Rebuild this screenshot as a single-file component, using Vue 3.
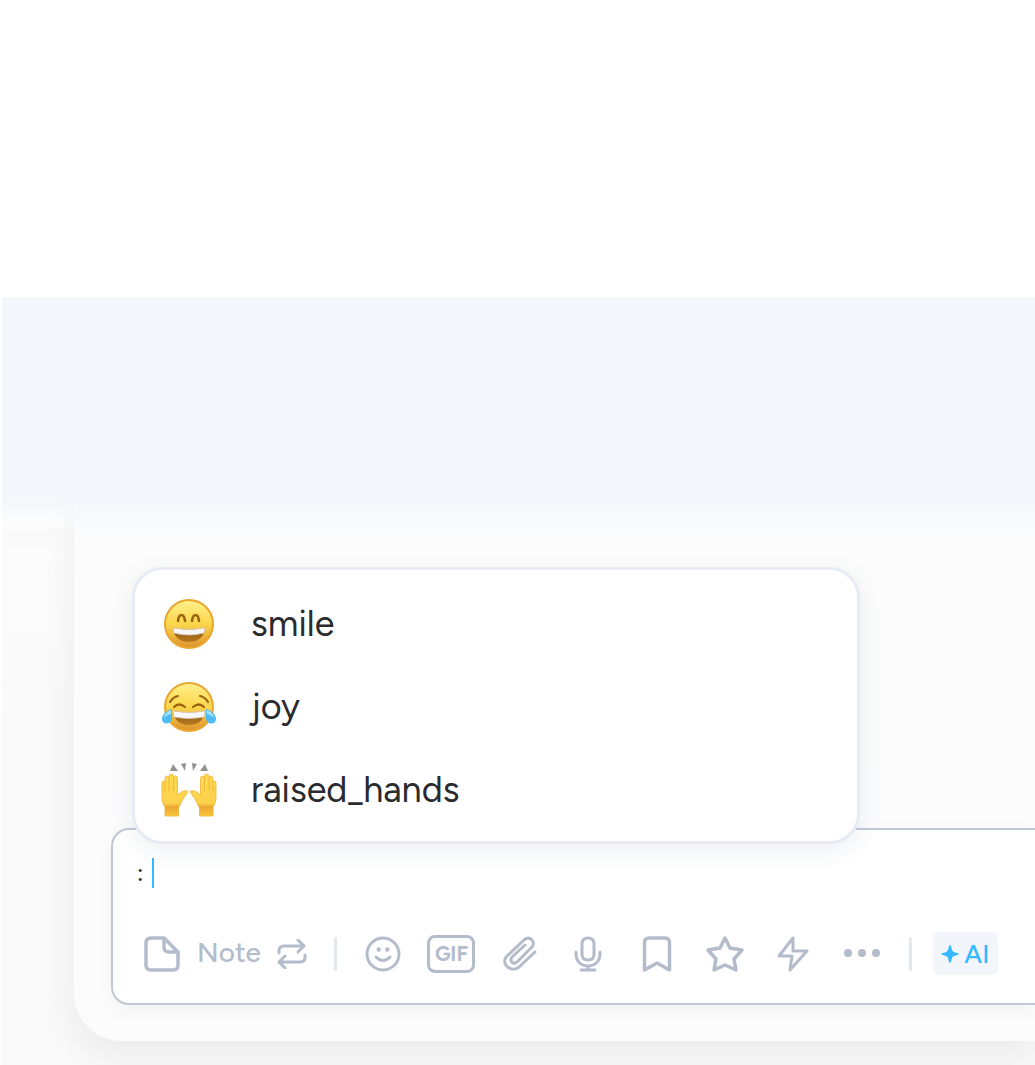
<template>
  <main class="page">
    <section class="stage">
      <div class="panel">
        <ul class="suggestions" aria-label="Emoji suggestions">
          <li v-for="item in suggestions" :key="item">
            <button class="suggestion" type="button" @click="pick(item)">
              <svg v-if="item === 'smile'" class="emoji" viewBox="0 0 56 56" aria-hidden="true">
                <defs>
                  <linearGradient id="face" x1="0" y1="0" x2="0" y2="1">
                    <stop offset="0" stop-color="#fff08c" />
                    <stop offset="0.5" stop-color="#fbd64b" />
                    <stop offset="1" stop-color="#dd922c" />
                  </linearGradient>
                  <linearGradient id="mouth" x1="0" y1="0" x2="0" y2="1">
                    <stop offset="0" stop-color="#8a5713" />
                    <stop offset="1" stop-color="#b87820" />
                  </linearGradient>
                </defs>
                <circle cx="28" cy="28" r="24" fill="url(#face)" stroke="#e9a630" stroke-width="2" />
                <path d="M17 25c1-8 6-8 7 0M31 25c1-8 6-8 7 0" fill="none" stroke="#9c6412" stroke-width="2.600" stroke-linecap="round" />
                <path d="M12 32q16 3 32 0c-1 10-8 14-16 14s-15-4-16-14z" fill="url(#mouth)" />
                <path d="M12 32q16 3 32 0l-1 5q-15 4-30 0z" fill="#f7f7f7" stroke="#d4cbbd" stroke-width="0.7" />
              </svg>
              <svg v-else-if="item === 'joy'" class="emoji" viewBox="0 0 56 56" aria-hidden="true">
                <circle cx="28" cy="28" r="24" fill="url(#face)" stroke="#e9a630" stroke-width="2" />
                <path d="M9 23q3-5 8-6M47 23q-3-5-8-6M13 28q5-5 11 0M32 28q6-5 11 0" fill="none" stroke="#9c6412" stroke-width="2.200" stroke-linecap="round" />
                <path d="M12 32q16 3 32 0c-1 9-7 14-16 14s-15-5-16-14z" fill="url(#mouth)" />
                <path d="M12 32q16 3 32 0l-1 6q-15 3-30 0z" fill="#f7f7f7" stroke="#d4cbbd" stroke-width="0.7" />
                <path d="M11 30C5 32 1 36 1 40c0 6 9 6 10 0zM45 30c6 2 10 6 10 10 0 6-9 6-10 0z" fill="#4dbcf5" />
                <path d="M10 31c-4 2-7 5-7 8 3-3 5-4 7-4zM46 31c4 2 7 5 7 8-3-3-5-4-7-4z" fill="#a9e4ff" />
              </svg>
              <svg v-else class="emoji" viewBox="0 0 56 56" aria-hidden="true">
                <defs>
                  <linearGradient id="skin" x1="0" y1="0" x2="0" y2="1">
                    <stop offset="0" stop-color="#ffdb50" />
                    <stop offset="0.7" stop-color="#fcd04b" />
                    <stop offset="0.78" stop-color="#eba730" />
                    <stop offset="1" stop-color="#fbc63c" />
                  </linearGradient>
                  <g id="hand">
                    <path
                      d="M4 54V45C1 41 1 37 1 30V21q0-2 1.500-2T4 20V17q0-3 2-3t2 2v-1q0-3 2.300-3t2.200 3v1q0-2 2-2t2 3V33l4-3q3-2 6-1 .8 1-1 3-4 5-6 10l-2 4v8z"
                      fill="url(#skin)"
                      stroke="#edb236"
                      stroke-width="0.8"
                    />
                    <path d="M4 20v9M8 16v13M12.500 16v13" fill="none" stroke="#efb136" stroke-width="0.9" />
                  </g>
                </defs>
                <use href="#hand" />
                <use href="#hand" transform="matrix(-1 0 0 1 56 0)" />
                <path d="M12 2l5 7-8 0zM20 2l5-1-1 8zM31 1l5 1-4 7zM44 2l3 7h-8z" fill="#929292" />
              </svg>
              <span>{{ item }}</span>
            </button>
          </li>
        </ul>

        <form class="composer" @submit.prevent>
          <div class="draft-row">
            <input v-model="draft" class="draft" type="text" aria-label="Note text" :style="{ width: `${draft.length}ch` }" />
            <span class="caret"></span>
          </div>

          <div class="toolbar">
            <button class="note" type="button">
              <svg class="note-icon" viewBox="0 0 36 36" aria-hidden="true">
                <path d="M7 2H20L34 16V29Q34 34 29 34H7Q2 34 2 29V7Q2 2 7 2zM20 2V11Q20 16 25 16H34" />
              </svg>
              <span class="note-label">Note</span>
              <svg class="repeat-icon" viewBox="0 0 30 30" aria-hidden="true">
                <path d="M2 14V12Q2 7 7 7H27M21 1l6 6-6 6M28 16v2q0 5-5 5H3M8 17l-6 6 6 6" />
              </svg>
            </button>

            <span class="divider"></span>

            <div class="tools">
              <button v-for="tool in tools" :key="tool.name" class="tool" type="button" :aria-label="tool.name">
                <span v-if="tool.name === 'GIF'" class="gif">GIF</span>
                <svg v-else viewBox="0 0 36 36" aria-hidden="true">
                  <path :d="tool.path" :class="{ filled: tool.filled, thick: tool.thick }" />
                  <path v-if="tool.dots" class="filled" :d="tool.dots" />
                </svg>
              </button>
            </div>

            <span class="divider"></span>

            <button class="ai" type="button">
              <svg viewBox="0 0 18 18" aria-hidden="true">
                <path d="M9 0Q10 0 10.500 3 11 6 12 6.500 13 7 16 8 18 8.500 18 9T16 10Q13 11 12 11.500 11 12 10.500 15 10 18 9 18T7.500 15Q7 12 6 11.500 5 11 2 10 0 9.500 0 9T2 8Q5 7 6 6.500 7 6 7.500 3 8 0 9 0z" />
              </svg>
              <span>AI</span>
            </button>
          </div>
        </form>
      </div>
    </section>
  </main>
</template>

<script setup>
import { ref } from "vue"

const draft = ref(":")
const suggestions = ["smile", "joy", "raised_hands"]

const tools = [
  {
    name: "Emoji",
    path: "M34 18A16 16 0 1 1 2 18A16 16 0 0 1 34 18M11 21Q18 28 25 21",
    dots: "M11.500 13.500a2.200 2.200 0 1 0 4.400 0a2.200 2.200 0 1 0-4.400 0M20.100 13.500a2.200 2.200 0 1 0 4.400 0a2.200 2.200 0 1 0-4.400 0",
  },
  { name: "GIF" },
  {
    name: "Attach file",
    path: "M33 16L17 31C10 37-1 29 4 21L22 4C28-1 34 6 30 11L15 26C11 29 7 25 10 21L23 9",
  },
  {
    name: "Record audio",
    path: "M18 2Q24 2 24 8V18Q24 24 18 24T12 18V8Q12 2 18 2zM6 16V18C6 34 30 34 30 18V16M18 30V34M11 34H25",
  },
  {
    name: "Saved replies",
    path: "M5.500 34V7Q5.500 2 10 2H26Q30.500 2 30.500 7V34L18 27z",
    thick: true,
  },
  {
    name: "Favorite",
    path: "M18 2L23 12L35 14L27 23L29 34L18 29L7 34L9 23L1 14L13 12z",
    thick: true,
  },
  {
    name: "Shortcuts",
    path: "M18 2L4 20H17L15 34L32 15H18z",
  },
  {
    name: "More",
    path: "M0 17a4 4 0 1 0 8 0a4 4 0 1 0-8 0M14 17a4 4 0 1 0 8 0a4 4 0 1 0-8 0M28 17a4 4 0 1 0 8 0a4 4 0 1 0-8 0",
    filled: true,
  },
]

function pick(name) {
  draft.value = `:${name}:`
}
</script>

<style>
body {
  margin: 0;
  background: #fff;
}
</style>

<style scoped>
.page {
  padding: 297px 0 0 2px;
  font-family: Figtree, Inter, sans-serif;
  color: #292b2f;
}

.stage {
  padding: 203px 0 24px 72px;
  overflow: hidden;
  background: linear-gradient(to bottom, #f3f7fb 200px, #fdfdfd 228px, #f9f9f9 235px, #fcfcfc 256px, #f9f9f9 420px);
}

.panel {
  padding: 67px 0 36px 37px;
  border-bottom-left-radius: 48px;
  background: linear-gradient(to bottom, #f4f7fb, #f8fafd 20px, #fcfcfc 42px, #fcfcfd);
  box-shadow: 0 14px 36px rgba(0, 0, 0, 0.06);
  clip-path: inset(0 0 -24px -60px);
}

button,
input {
  border: 0;
  padding: 0;
  background: none;
  color: inherit;
  font: inherit;
}

.suggestions {
  position: relative;
  z-index: 1;
  box-sizing: border-box;
  width: calc(100% - 196px);
  margin: 0 0 -16px 21px;
  padding: 12px 0 10px;
  list-style: none;
  border: 3px solid #e7ebf3;
  border-radius: 30px;
  background: #fff;
  box-shadow: 0 6px 24px rgba(60, 80, 110, 0.09);
}

.suggestion {
  display: flex;
  align-items: center;
  gap: 34px;
  width: 100%;
  height: 83px;
  padding: 0 26px;
  font-size: 36px;
  line-height: 40px;
  text-align: left;
}

.emoji {
  width: 56px;
  height: 56px;
}

.composer {
  padding: 28px 0 28px 24px;
  border: 2px solid #c1c8d5;
  border-right: 0;
  border-radius: 18px 0 0 18px;
  background: #fff;
  box-shadow: 0 6px 20px rgba(0, 0, 0, 0.04);
}

.draft-row {
  display: flex;
  align-items: center;
  height: 30px;
}

.draft {
  font-size: 24px;
  font-weight: 500;
  line-height: 30px;
  outline: none;
}

.caret {
  width: 2px;
  height: 30px;
  background: #36b9ff;
}

.toolbar {
  display: flex;
  align-items: center;
  margin-top: 44px;
  color: #b4bccb;
}

.toolbar svg {
  fill: none;
  stroke: currentColor;
  stroke-width: 3;
  stroke-linejoin: round;
  stroke-linecap: round;
}

.note {
  display: flex;
  align-items: center;
  margin-left: 7px;
  font-size: 28px;
  font-weight: 500;
  line-height: 32px;
}

.toolbar .note-icon {
  width: 36px;
  height: 36px;
  margin-right: 17px;
  stroke-width: 3.5;
}

.note-label {
  padding-bottom: 4px;
}

.toolbar .repeat-icon {
  width: 30px;
  height: 30px;
  margin-left: 16px;
}

.divider {
  flex: none;
  width: 3px;
  height: 34px;
  margin-left: 27px;
  border-radius: 2px;
  background: #e3e7ef;
}

.tools {
  display: grid;
  grid-template-columns: repeat(8, 1fr);
  width: 547px;
  margin-left: 12px;
}

.tools + .divider {
  margin-left: 13px;
}

.tool {
  display: flex;
  align-items: center;
  justify-content: center;
  height: 42px;
}

.tool svg {
  width: 36px;
  height: 36px;
  overflow: visible;
}

.toolbar .thick {
  stroke-width: 3.5;
}

.toolbar .filled {
  fill: currentColor;
  stroke: none;
}

.gif {
  box-sizing: border-box;
  width: 48px;
  height: 38px;
  border: 3px solid currentColor;
  border-radius: 8px;
  font-size: 21px;
  font-weight: 700;
  line-height: 32px;
  text-align: center;
}

.ai {
  display: flex;
  align-items: center;
  justify-content: center;
  gap: 5px;
  width: 65px;
  height: 43px;
  margin-left: 21px;
  border-radius: 6px;
  background: #f2f6fb;
  color: #36b9ff;
  font-size: 26px;
  font-weight: 500;
}

.toolbar .ai svg {
  width: 18px;
  height: 18px;
  fill: currentColor;
  stroke: none;
}
</style>
